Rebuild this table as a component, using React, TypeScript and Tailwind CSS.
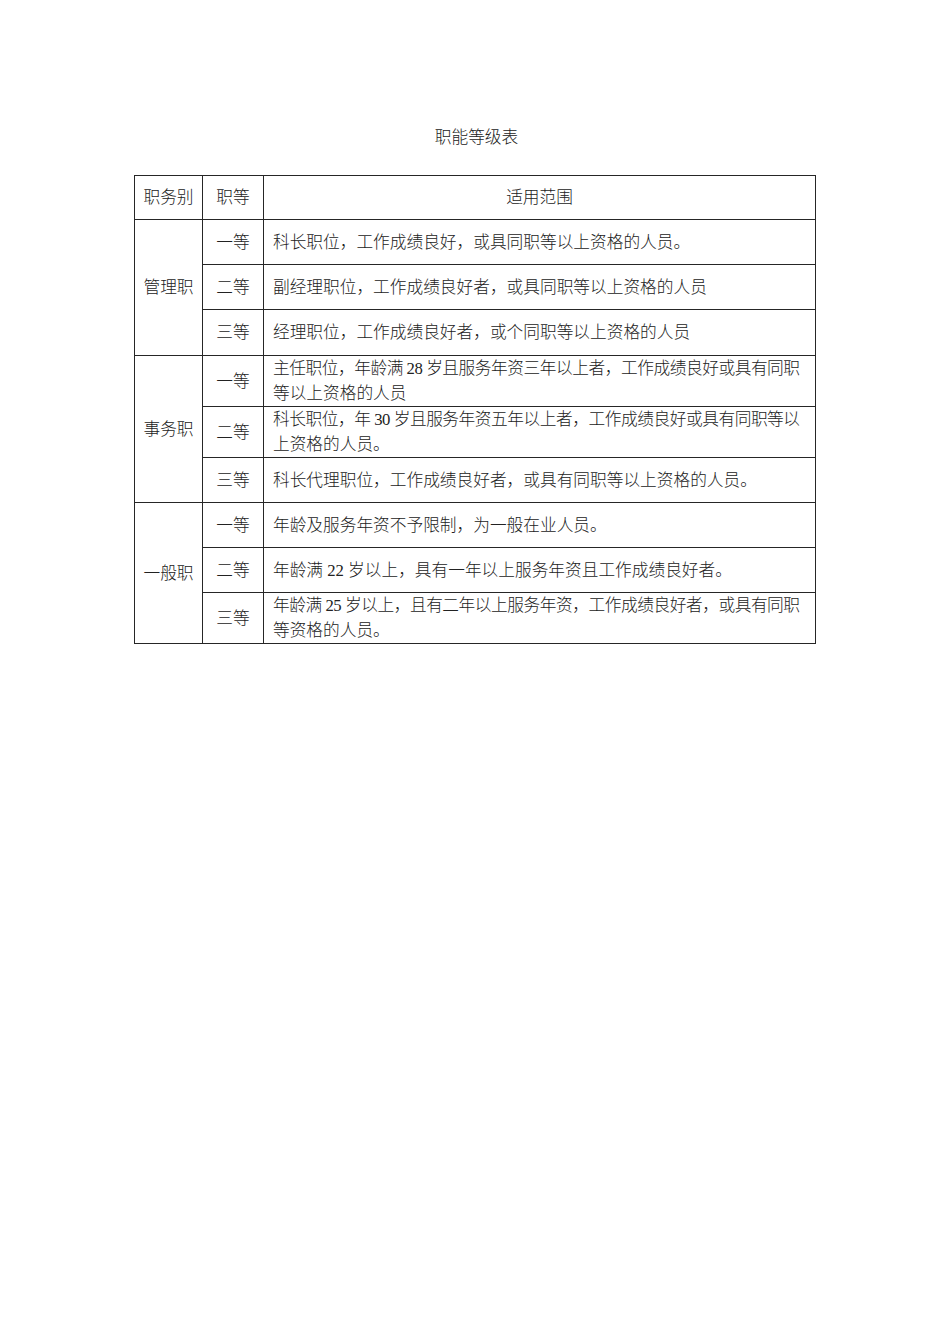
const rows = [
  {
    group: '管理职',
    items: [
      { grade: '一等', h: 'h-[45px]', lines: ['科长职位，工作成绩良好，或具同职等以上资格的人员。'] },
      { grade: '二等', h: 'h-[45px]', lines: ['副经理职位，工作成绩良好者，或具同职等以上资格的人员'] },
      { grade: '三等', h: 'h-[46px]', lines: ['经理职位，工作成绩良好者，或个同职等以上资格的人员'] },
    ],
  },
  {
    group: '事务职',
    items: [
      {
        grade: '一等',
        h: 'h-[50px]',
        lines: ['主任职位，年龄满 28 岁且服务年资三年以上者，工作成绩良好或具有同职', '等以上资格的人员'],
      },
      {
        grade: '二等',
        h: 'h-[51px]',
        lines: ['科长职位，年 30 岁且服务年资五年以上者，工作成绩良好或具有同职等以', '上资格的人员。'],
      },
      { grade: '三等', h: 'h-[45px]', lines: ['科长代理职位，工作成绩良好者，或具有同职等以上资格的人员。'] },
    ],
  },
  {
    group: '一般职',
    items: [
      { grade: '一等', h: 'h-[45px]', lines: ['年龄及服务年资不予限制，为一般在业人员。'] },
      { grade: '二等', h: 'h-[45px]', lines: ['年龄满 22 岁以上，具有一年以上服务年资且工作成绩良好者。'] },
      {
        grade: '三等',
        h: 'h-[51px]',
        lines: ['年龄满 25 岁以上，且有二年以上服务年资，工作成绩良好者，或具有同职', '等资格的人员。'],
      },
    ],
  },
];

const cell = 'border border-[#262626] p-0 align-middle';

export default function App() {
  return (
    <div
      className="min-h-[1344px] w-[950px] bg-white pt-[125px] text-[16.7px] font-light leading-[25px] text-[#222]"
      style={{ fontFamily: '"Liberation Serif", "Noto Sans CJK SC", serif' }}
    >
      <h1 className="ml-[3px] h-[25px] text-center text-[16.7px] font-light">职能等级表</h1>
      <table className="mx-auto mt-[25px] w-[681px] table-fixed border-collapse">
        <colgroup>
          <col className="w-[68px]" />
          <col className="w-[61px]" />
          <col className="w-[552px]" />
        </colgroup>
        <tbody>
          <tr className="h-[44px]">
            <td className={`${cell} text-center`}>职务别</td>
            <td className={`${cell} text-center`}>职等</td>
            <td className={`${cell} text-center`}>适用范围</td>
          </tr>
          {rows.map((g) =>
            g.items.map((it, i) => (
              <tr key={g.group + it.grade} className={it.h}>
                {i === 0 && (
                  <td rowSpan={g.items.length} className={`${cell} text-center`}>
                    {g.group}
                  </td>
                )}
                <td className={`${cell} text-center`}>{it.grade}</td>
                <td className={`${cell} pl-[9px]`}>
                  {it.lines.map((l, j) => (
                    <span
                      key={j}
                      className={`block whitespace-nowrap ${it.lines.length > 1 && j === 0 ? 'tracking-[-0.45px]' : ''}`}
                    >
                      {l}
                    </span>
                  ))}
                </td>
              </tr>
            ))
          )}
        </tbody>
      </table>
    </div>
  );
}
